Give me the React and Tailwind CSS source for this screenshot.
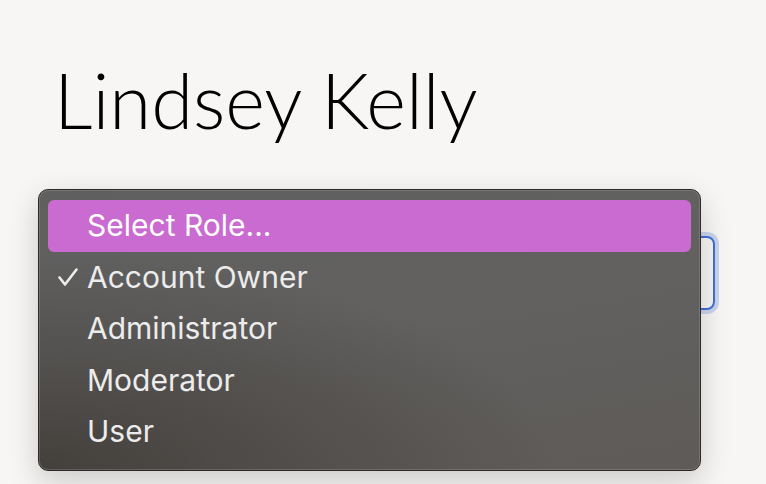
const roles = [
  { label: "Select Role...", active: true },
  { label: "Account Owner", checked: true },
  { label: "Administrator" },
  { label: "Moderator" },
  { label: "User" },
];

function CheckMark() {
  return (
    <svg
      className="absolute left-[10px] top-1/2 -translate-y-1/2"
      width="20"
      height="19"
      viewBox="0 0 20 19"
      fill="none"
      stroke="#ececec"
      strokeWidth="2.6"
      strokeLinecap="round"
      strokeLinejoin="round"
    >
      <path d="M1.5 10 L7 17 L18.5 2" />
    </svg>
  );
}

function RoleMenu() {
  return (
    <div className="absolute left-[38px] top-[189px] h-[282px] w-[663px] rounded-[10px] border border-[#2b2a28] bg-[linear-gradient(170deg,#5f5f5f_0%,#626160_45%,#5e5b58_100%)] shadow-[0_10px_30px_rgba(0,0,0,0.18)]">
      <div className="absolute inset-0 rounded-[9px] bg-[radial-gradient(ellipse_at_0%_100%,rgba(60,56,52,0.8)_0%,rgba(60,56,52,0)_55%)]" />
      <div className="absolute inset-0 rounded-[9px] border border-white/15" />
      <ul className="relative flex flex-col px-[9px] pt-[10px]">
        {roles.map((role) => (
          <li
            key={role.label}
            className={`relative flex h-[51.5px] items-center rounded-[6px] pl-[39px] font-['Inter',sans-serif] text-[30px] ${
              role.active ? "bg-[#c96bd0] text-white" : "text-[#ececec]"
            }`}
          >
            {role.checked && <CheckMark />}
            {role.label}
          </li>
        ))}
      </ul>
    </div>
  );
}

export default function App() {
  return (
    <div className="min-h-screen overflow-hidden bg-[#f7f6f4]">
      <div className="relative h-[484px] w-[766px]">
        <h1 className="px-[54px] pt-[54px] font-['Lato',sans-serif] text-[76px] font-light leading-[92px] text-black">
          Lindsey Kelly
        </h1>
        <div className="ml-[50px] mt-[90px] h-[74px] w-[665px] rounded-[8px] border-2 border-[#3f6fd8] ring-4 ring-[#3f6fd8]/25" />
        <RoleMenu />
      </div>
    </div>
  );
}
